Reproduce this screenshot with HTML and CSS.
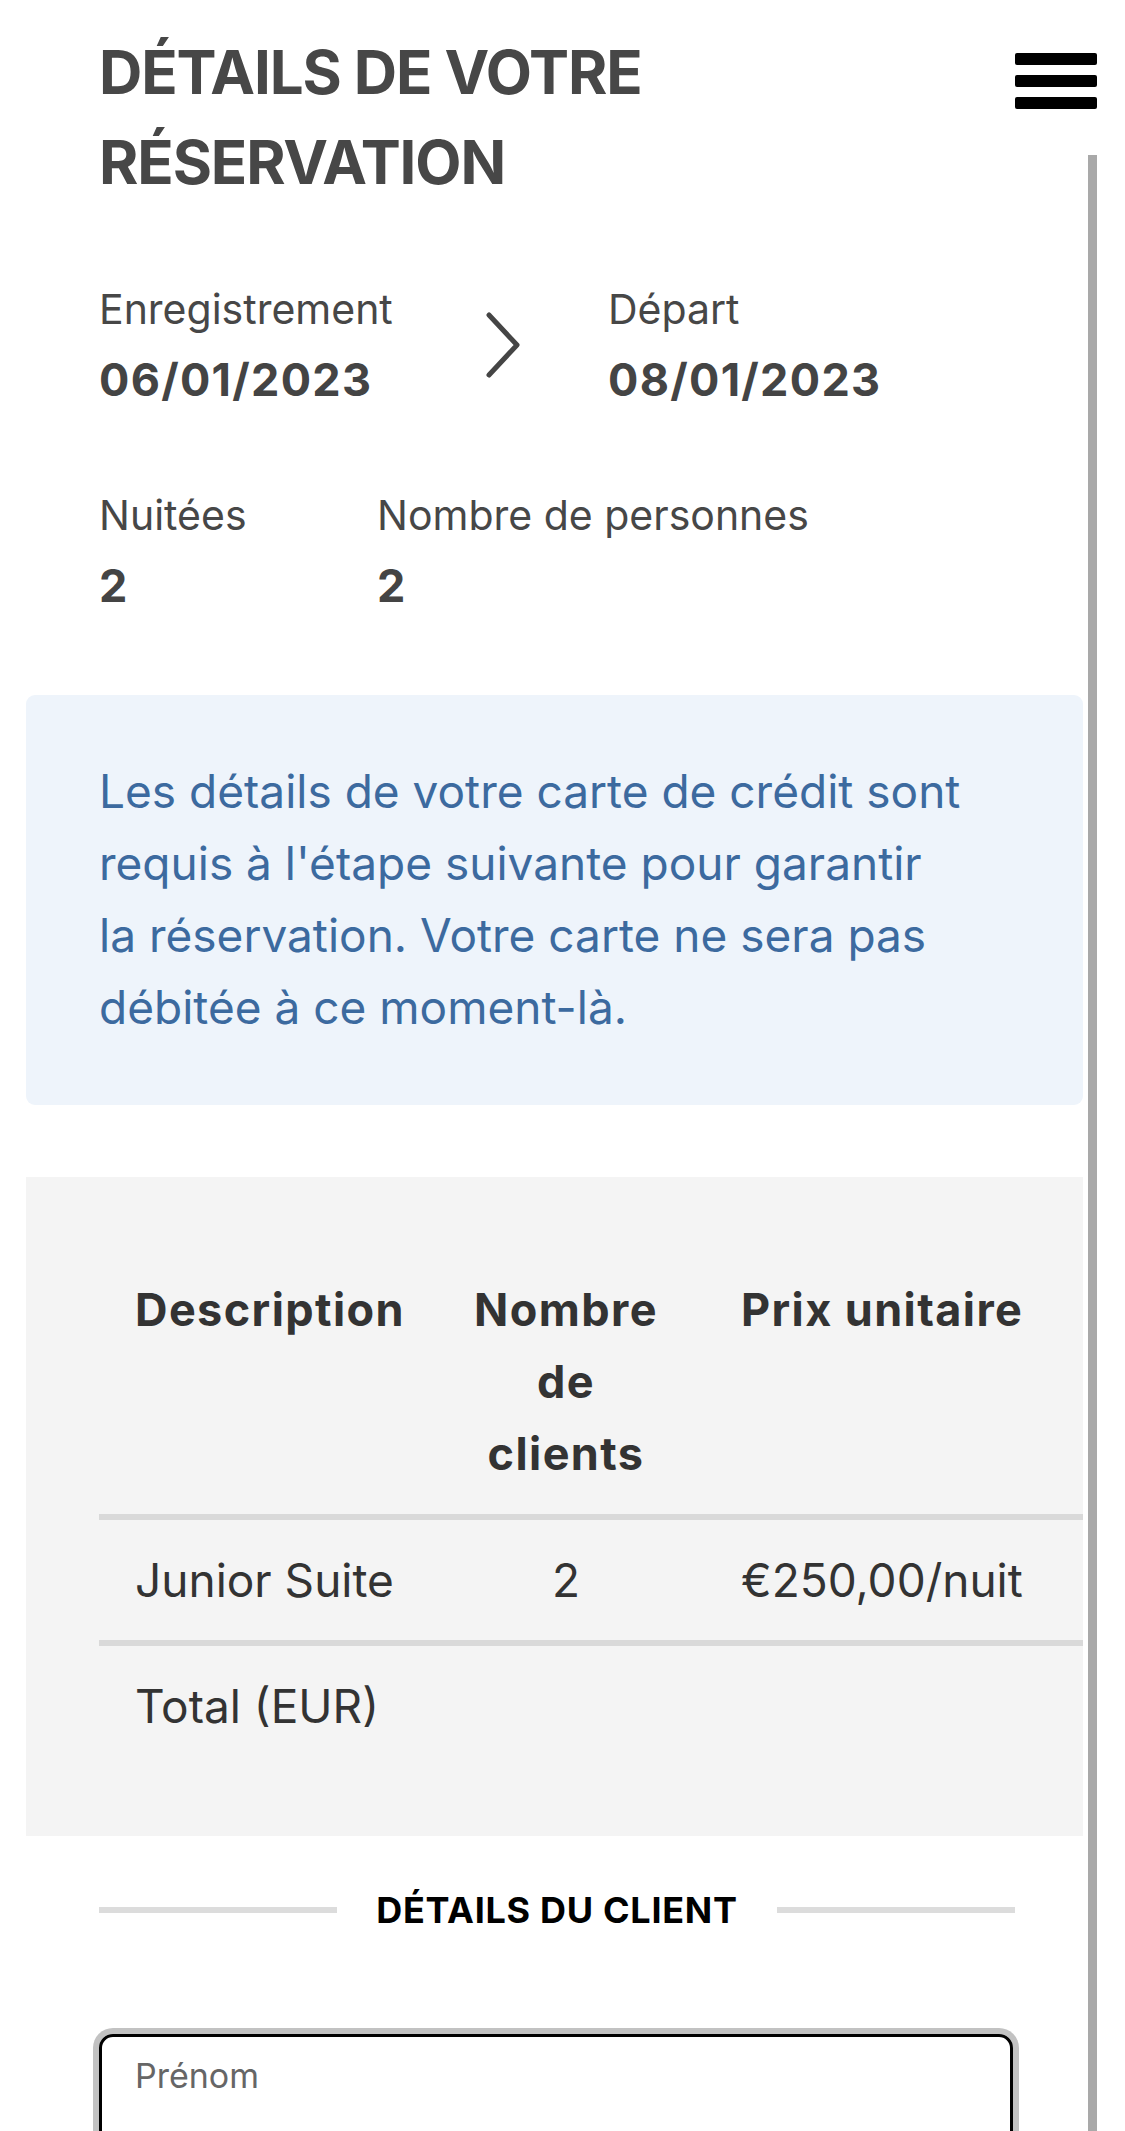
FILE: index.html
```html
<!DOCTYPE html>
<html lang="fr">
<head>
<meta charset="utf-8">
<title>Détails de votre réservation</title>
<link rel="stylesheet" href="styles.css">
</head>
<body>
<div class="scrollbar"></div>
<header class="top">
  <h1 class="title">DÉTAILS DE VOTRE RÉSERVATION</h1>
  <button class="menu" aria-label="Menu"><span></span><span></span><span></span></button>
</header>
<main>
  <section class="stay">
    <div class="dates">
      <div class="field">
        <div class="label">Enregistrement</div>
        <div class="value">06/01/2023</div>
      </div>
      <svg class="chev" width="36" height="68" viewBox="0 0 36 68" aria-hidden="true">
        <polyline points="4,3 32,33 4,63" fill="none" stroke="#454545" stroke-width="5" stroke-linecap="round" stroke-linejoin="round"/>
      </svg>
      <div class="field">
        <div class="label">Départ</div>
        <div class="value">08/01/2023</div>
      </div>
    </div>
    <div class="counts">
      <div class="field">
        <div class="label">Nuitées</div>
        <div class="value">2</div>
      </div>
      <div class="field">
        <div class="label">Nombre de personnes</div>
        <div class="value">2</div>
      </div>
    </div>
  </section>

  <div class="notice">
    <p>Les détails de votre carte de crédit sont<br>requis à l'étape suivante pour garantir<br>la réservation. Votre carte ne sera pas<br>débitée à ce moment-là.</p>
  </div>

  <div class="summary">
    <table class="prices">
      <thead>
        <tr>
          <th class="c1">Description</th>
          <th class="c2">Nombre de clients</th>
          <th class="c3">Prix unitaire</th>
        </tr>
      </thead>
      <tbody>
        <tr>
          <td class="c1">Junior Suite</td>
          <td class="c2">2</td>
          <td class="c3">€250,00/nuit</td>
        </tr>
        <tr>
          <td class="c1">Total (EUR)</td>
          <td class="c2"></td>
          <td class="c3"></td>
        </tr>
      </tbody>
    </table>
  </div>

  <div class="divider">
    <span class="rule"></span>
    <h2 class="divider-title">DÉTAILS DU CLIENT</h2>
    <span class="rule"></span>
  </div>

  <div class="input">
    <label class="input-label">Prénom</label>
  </div>
</main>
</body>
</html>
```
FILE: styles.css
```css
* { box-sizing: border-box; }

html, body {
  margin: 0;
  padding: 0;
  background: #ffffff;
}

body {
  width: 1125px;
  overflow: hidden;
  font-family: Inter, "Noto Sans", "Liberation Sans", sans-serif;
  color: #444444;
}

.scrollbar {
  position: fixed;
  left: 1088px;
  top: 155px;
  bottom: 0;
  width: 9px;
  background: #a9a9a9;
}

.top {
  display: flex;
  justify-content: space-between;
  align-items: flex-start;
  padding: 27px 28px 0 99px;
}

.title {
  margin: 0;
  max-width: 860px;
  font-size: 60px;
  line-height: 90px;
  font-weight: 700;
  color: #474747;
  letter-spacing: -1.1px;
}

.menu {
  margin-top: 26px;
  width: 82px;
  padding: 0;
  border: 0;
  background: none;
  display: flex;
  flex-direction: column;
  gap: 10px;
}

.menu span {
  display: block;
  height: 12px;
  background: #000000;
  border-radius: 2px;
}

.stay {
  padding: 75px 64px 0 99px;
}

.dates {
  display: grid;
  grid-template-columns: 386px 123px auto;
  align-items: center;
}

.counts {
  display: grid;
  grid-template-columns: 278px auto;
  margin-top: 78px;
}

.label {
  font-size: 41px;
  line-height: 54px;
  color: #474747;
}

.value {
  margin-top: 14px;
  font-size: 45px;
  line-height: 60px;
  font-weight: 700;
  color: #444444;
  letter-spacing: 1.3px;
}

.chev {
  display: block;
}

.notice {
  margin: 79px 42px 0 26px;
  padding: 60px 73px 62px;
  background: #eef4fb;
  border-radius: 9px;
  color: #3c6a9f;
  font-size: 46px;
  line-height: 72px;
}

.notice p {
  margin: 0;
  white-space: nowrap;
}

.summary {
  margin: 72px 42px 0 26px;
  padding: 73px 0 70px 73px;
  background: #f4f4f4;
}

.prices {
  width: 984px;
  border-collapse: collapse;
  table-layout: fixed;
  font-size: 46px;
  line-height: 72px;
  color: #333333;
}

.prices th {
  font-size: 45px;
  font-weight: 700;
  letter-spacing: 1.4px;
  text-align: left;
  vertical-align: top;
  padding: 24px 36px;
}

.prices td {
  font-weight: 400;
  text-align: left;
  padding: 24px 36px;
}

.prices tbody tr {
  border-top: 6px solid #d9d9d9;
}

.prices .c1 { width: 332px; }
.prices .c2 { width: 270px; text-align: center; }
.prices .c3 { width: 382px; padding-left: 40px; white-space: nowrap; }

.divider {
  display: flex;
  align-items: center;
  gap: 39px;
  margin: 50px 110px 0 99px;
}

.rule {
  flex: 1;
  height: 6px;
  background: #dcdcdc;
}

.divider-title {
  margin: 0;
  font-size: 36px;
  line-height: 48px;
  font-weight: 700;
  color: #000000;
  letter-spacing: 0.7px;
}

.input {
  margin: 100px 112px 0 99px;
  height: 220px;
  padding: 19px 33px;
  border: 3px solid #000000;
  border-radius: 14px;
  box-shadow: 0 0 0 6px #c2c2c2;
}

.input-label {
  display: block;
  font-size: 34px;
  line-height: 40px;
  color: #666666;
}
```
